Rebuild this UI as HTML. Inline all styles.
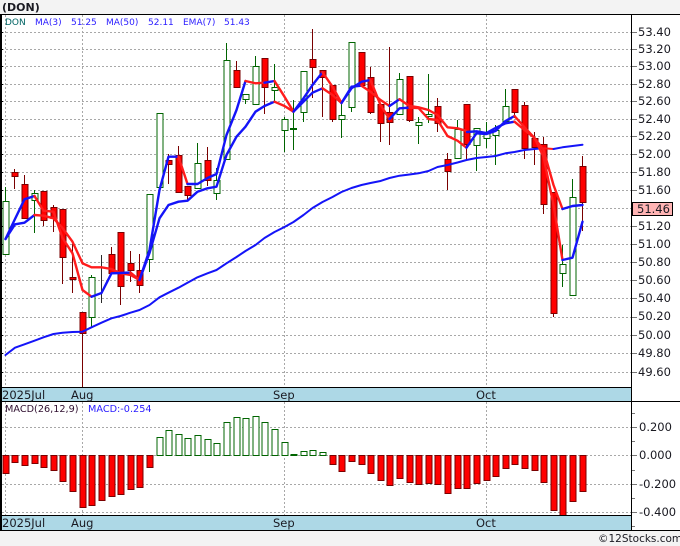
<!DOCTYPE html>
<html><head><meta charset="utf-8"><title>DON</title>
<style>
html,body{margin:0;padding:0;background:#f3f3f3;width:680px;height:546px;overflow:hidden}
svg{display:block}
text{font-family:"DejaVu Sans","Liberation Sans",sans-serif;fill:#1a1a22}
.a{font-size:11.5px}
.g{stroke:#a8a8a8;stroke-width:1;stroke-dasharray:2 2;fill:none}
.bl{fill:none;stroke:#1414f8;stroke-width:2.4;stroke-linejoin:round;stroke-linecap:round}
.rl{fill:none;stroke:#ff1c1c;stroke-width:2.4;stroke-linejoin:round;stroke-linecap:round}
.m{stroke-width:2}
.r rect{fill:#f00;stroke:#7a0000;stroke-width:1}
.n rect{fill:#fff;stroke:#006400;stroke-width:1}
</style></head><body>
<svg width="680" height="546" viewBox="0 0 680 546" xmlns="http://www.w3.org/2000/svg">
<rect width="680" height="546" fill="#f3f3f3"/>
<rect x="0" y="15" width="680" height="516" fill="#fff"/>
<text x="2" y="11" font-size="11" font-weight="bold" fill="#111">(DON)</text>

<g shape-rendering="crispEdges">
<path class="g" d="M2 32.5H632M2 49.5H632M2 66.5H632M2 84.5H632M2 101.5H632M2 119.5H632M2 136.5H632M2 154.5H632M2 172.5H632M2 190.5H632M2 208.5H632M2 226.5H632M2 244.5H632M2 262.5H632M2 280.5H632M2 298.5H632M2 317.5H632M2 335.5H632M2 353.5H632M2 372.5H632"/>
<path class="g" d="M5.5 15V387M82.5 15V387M284.5 15V387M486.5 15V387"/>
<path class="g" d="M2 427.5H632M2 455.5H632M2 484.5H632M2 512.5H632"/>
<path class="g" d="M5.5 402V515M82.5 402V515M284.5 402V515M486.5 402V515"/>
</g>

<g shape-rendering="crispEdges" fill="none" stroke-width="1">
<path stroke="#7a0000" d="M14.5 169V189M24.5 175V218M43.5 191V226M53.5 205V232M62.5 209V284M72.5 244V293M82.5 312V387M111.5 247V273M120.5 232V305M130.5 251V282M139.5 254V293M168.5 154V184M178.5 146V193M187.5 186V201M207.5 147V186M236.5 61V87M264.5 58V114M312.5 29V98M322.5 70V117M332.5 85V122M361.5 52V85M370.5 67V114M380.5 104V142M389.5 47V145M409.5 76V122M437.5 98V132M447.5 153V190M466.5 104V160M514.5 89V118M524.5 102V159M534.5 132V165M543.5 137V214M553.5 192V317M582.5 156V231"/>
<path stroke="#006400" d="M5.5 187V254M34.5 190V233M91.5 275V327M149.5 194V272M197.5 143V188M216.5 168V200M226.5 43V159M245.5 94V104M255.5 56V104M274.5 64V102M284.5 117V152M293.5 100V150M303.5 71V122M341.5 103V138M351.5 42V112M399.5 73V114M418.5 117V144M428.5 74V123M457.5 120V158M476.5 128V171M486.5 122V148M495.5 125V165M505.5 89V121M562.5 245V287M572.5 179V295"/>
<path stroke="#2a2a2a" d="M101.5 255V303"/>
</g>

<g class="r" shape-rendering="crispEdges">
<rect x="12" y="172.5" width="6" height="4"/>
<rect x="22" y="184.5" width="6" height="34"/>
<rect x="41" y="191.5" width="6" height="29"/>
<rect x="51" y="207.5" width="6" height="11"/>
<rect x="60" y="209.5" width="6" height="48"/>
<rect x="70" y="277.5" width="6" height="2"/>
<rect x="80" y="312.5" width="6" height="21"/>
<rect x="109" y="254.5" width="6" height="19"/>
<rect x="118" y="232.5" width="6" height="54"/>
<rect x="128" y="263.5" width="6" height="7"/>
<rect x="137" y="270.5" width="6" height="15"/>
<rect x="166" y="160.5" width="6" height="4"/>
<rect x="176" y="155.5" width="6" height="37"/>
<rect x="185" y="186.5" width="6" height="9"/>
<rect x="205" y="160.5" width="6" height="20"/>
<rect x="234" y="70.5" width="6" height="17"/>
<rect x="262" y="58.5" width="6" height="29"/>
<rect x="310" y="59.5" width="6" height="8"/>
<rect x="320" y="70.5" width="6" height="7"/>
<rect x="330" y="85.5" width="6" height="34"/>
<rect x="359" y="52.5" width="6" height="33"/>
<rect x="368" y="77.5" width="6" height="35"/>
<rect x="378" y="104.5" width="6" height="19"/>
<rect x="387" y="112.5" width="6" height="10"/>
<rect x="407" y="76.5" width="6" height="44"/>
<rect x="435" y="106.5" width="6" height="17"/>
<rect x="445" y="159.5" width="6" height="12"/>
<rect x="464" y="104.5" width="6" height="40"/>
<rect x="512" y="89.5" width="6" height="23"/>
<rect x="522" y="105.5" width="6" height="43"/>
<rect x="532" y="138.5" width="6" height="9"/>
<rect x="541" y="144.5" width="6" height="60"/>
<rect x="551" y="192.5" width="6" height="121"/>
<rect x="580" y="166.5" width="6" height="36"/>
</g>
<g class="n" shape-rendering="crispEdges">
<rect x="3" y="201.5" width="6" height="53"/>
<rect x="32" y="193.5" width="6" height="7"/>
<rect x="89" y="277.5" width="6" height="40"/>
<rect x="147" y="194.5" width="6" height="65"/>
<rect x="157" y="113.5" width="6" height="74"/>
<rect x="195" y="163.5" width="6" height="25"/>
<rect x="214" y="180.5" width="6" height="13"/>
<rect x="224" y="60.5" width="6" height="99"/>
<rect x="243" y="94.5" width="6" height="5"/>
<rect x="253" y="66.5" width="6" height="38"/>
<rect x="272" y="87.5" width="6" height="3"/>
<rect x="282" y="119.5" width="6" height="11"/>
<rect x="301" y="71.5" width="6" height="41"/>
<rect x="339" y="115.5" width="6" height="4"/>
<rect x="349" y="42.5" width="6" height="65"/>
<rect x="397" y="79.5" width="6" height="35"/>
<rect x="416" y="122.5" width="6" height="3"/>
<rect x="426" y="114.5" width="6" height="2"/>
<rect x="455" y="129.5" width="6" height="29"/>
<rect x="474" y="128.5" width="6" height="17"/>
<rect x="484" y="132.5" width="6" height="6"/>
<rect x="493" y="130.5" width="6" height="5"/>
<rect x="503" y="106.5" width="6" height="15"/>
<rect x="560" y="264.5" width="6" height="9"/>
<rect x="570" y="197.5" width="6" height="98"/>
</g>
<path shape-rendering="crispEdges" stroke="#006400" stroke-width="2" d="M290 129H297"/>

<polyline class="bl m" points="5.5,355 15,347.7 24.5,344.3 34.5,340.7 43.5,337.3 53.5,334 62.5,332.7 72.5,332 82.5,331.7 91.5,327.3 101.5,322.7 111.5,318.3 120.5,316 130.5,312.7 139.5,310 149.5,305 159.5,297.3 168.5,292.7 178.5,287.7 187.5,282.7 197.5,277.3 207.5,273.3 216.5,270 226.5,263.3 236.5,257 245.5,251 255.5,245 264.5,238 274.5,232 284.5,227 293.5,222 303.5,215 312.5,208 322.5,202 332.5,197 341.5,192 351.5,188 361.5,185 370.5,183 380.5,181 389.5,178 399.5,175.7 409.5,174.5 418.5,173.3 428.5,171 437.5,167 447.5,165 457.5,162.5 466.5,160 476.5,158 486.5,157 495.5,156 505.5,153.3 514.5,152 524.5,150 534.5,149 543.5,148.3"/>
<polyline class="rl m" points="543.5,148.3 553.5,149"/>
<polyline class="bl m" points="553.5,149 562.5,147.3 572.5,146 582.5,144.7"/>

<polyline class="bl" points="5.5,239 15,224.3 24.5,222.7 34.5,215"/>
<polyline class="rl" points="34.5,215 43.5,215.7 53.5,218.3 62.5,228 72.5,241.7 82.5,263.3 91.5,267.3 101.5,267.3 111.5,269 120.5,273.3 130.5,275 139.5,280"/>
<polyline class="bl" points="139.5,280 149.5,253 159.5,218.3 168.5,205 178.5,201.7 187.5,200.7 197.5,191.7 207.5,188.3 216.5,186.7 226.5,155 236.5,136.7 245.5,126.7 255.5,111.7 264.5,106 274.5,101.7"/>
<polyline class="rl" points="274.5,101.7 284.5,106 293.5,111.7"/>
<polyline class="bl" points="293.5,111.7 303.5,101.7 312.5,92.7 322.5,88.3"/>
<polyline class="rl" points="322.5,88.3 332.5,95 341.5,103"/>
<polyline class="bl" points="341.5,103 351.5,86.7 361.5,85.7"/>
<polyline class="rl" points="361.5,85.7 370.5,91.7 380.5,100 389.5,106"/>
<polyline class="bl" points="389.5,106 399.5,99.3"/>
<polyline class="rl" points="399.5,99.3 409.5,106 418.5,107.3 428.5,110 437.5,115 447.5,127.3 457.5,128.3 466.5,131"/>
<polyline class="bl" points="467,132 476.5,131.3 486.5,133 495.5,128 505.5,123.3 514.5,121.7"/>
<polyline class="rl" points="514.5,121.7 524.5,130 534.5,138 543.5,150 553.5,185 562.5,209"/>
<polyline class="bl" points="562.5,209 572.5,206 582.5,205"/>

<polyline class="bl" points="5.5,239 15,219 24.5,199.3 34.5,196"/>
<polyline class="rl" points="34.5,196 43.5,210.7 53.5,211.7 62.5,238 72.5,253.3 82.5,290 91.5,296.7"/>
<polyline class="bl" points="91.5,296.7 101.5,293 111.5,273.3 120.5,273 130.5,272.5"/>
<polyline class="rl" points="130.5,272.5 139.5,280"/>
<polyline class="bl" points="139.5,280 149.5,250 159.5,190 168.5,156.7 178.5,156.7"/>
<polyline class="rl" points="178.5,156.7 187.5,184"/>
<polyline class="bl" points="187.5,184 197.5,184 207.5,178 216.5,174 226.5,135 236.5,110 245.5,81"/>
<polyline class="rl" points="245.5,81 255.5,83.3 264.5,82.7"/>
<polyline class="bl" points="264.5,82.7 274.5,81"/>
<polyline class="rl" points="274.5,81 284.5,96.7 293.5,111.7"/>
<polyline class="bl" points="293.5,111.7 303.5,98.3 312.5,85 322.5,72.3"/>
<polyline class="rl" points="322.5,72.3 332.5,86.7 341.5,103"/>
<polyline class="bl" points="341.5,103 351.5,88.3 361.5,81.7 370.5,80"/>
<polyline class="rl" points="370.5,80 380.5,105 389.5,119"/>
<polyline class="bl" points="389.5,119 399.5,108.3 409.5,107.7"/>
<polyline class="rl" points="409.5,107.7 418.5,108 428.5,119 437.5,120 447.5,136 457.5,140.7 466.5,147.7"/>
<polyline class="bl" points="466.5,147.7 476.5,133.3 486.5,134 495.5,131 505.5,121 514.5,116"/>
<polyline class="rl" points="514.5,116 524.5,127.3 534.5,138 543.5,156.7 553.5,205 562.5,260"/>
<polyline class="bl" points="562.5,260 572.5,257.7 582.5,221.7"/>

<g class="r" shape-rendering="crispEdges">
<rect x="3" y="455.5" width="6" height="18"/>
<rect x="12" y="455.5" width="6" height="7"/>
<rect x="22" y="455.5" width="6" height="10"/>
<rect x="32" y="455.5" width="6" height="8"/>
<rect x="41" y="455.5" width="6" height="12"/>
<rect x="51" y="455.5" width="6" height="15"/>
<rect x="60" y="455.5" width="6" height="26"/>
<rect x="70" y="455.5" width="6" height="36"/>
<rect x="80" y="455.5" width="6" height="52"/>
<rect x="89" y="455.5" width="6" height="50"/>
<rect x="99" y="455.5" width="6" height="45"/>
<rect x="109" y="455.5" width="6" height="41"/>
<rect x="118" y="455.5" width="6" height="39"/>
<rect x="128" y="455.5" width="6" height="34"/>
<rect x="137" y="455.5" width="6" height="32"/>
<rect x="147" y="455.5" width="6" height="12"/>
<rect x="330" y="455.5" width="6" height="9"/>
<rect x="339" y="455.5" width="6" height="16"/>
<rect x="349" y="455.5" width="6" height="6"/>
<rect x="359" y="455.5" width="6" height="9"/>
<rect x="368" y="455.5" width="6" height="18"/>
<rect x="378" y="455.5" width="6" height="25"/>
<rect x="387" y="455.5" width="6" height="30"/>
<rect x="397" y="455.5" width="6" height="23"/>
<rect x="407" y="455.5" width="6" height="27"/>
<rect x="416" y="455.5" width="6" height="29"/>
<rect x="426" y="455.5" width="6" height="28"/>
<rect x="435" y="455.5" width="6" height="29"/>
<rect x="445" y="455.5" width="6" height="38"/>
<rect x="455" y="455.5" width="6" height="33"/>
<rect x="464" y="455.5" width="6" height="33"/>
<rect x="474" y="455.5" width="6" height="28"/>
<rect x="484" y="455.5" width="6" height="25"/>
<rect x="493" y="455.5" width="6" height="21"/>
<rect x="503" y="455.5" width="6" height="13"/>
<rect x="512" y="455.5" width="6" height="9"/>
<rect x="522" y="455.5" width="6" height="13"/>
<rect x="532" y="455.5" width="6" height="15"/>
<rect x="541" y="455.5" width="6" height="27"/>
<rect x="551" y="455.5" width="6" height="55"/>
<rect x="560" y="455.5" width="6" height="60"/>
<rect x="570" y="455.5" width="6" height="46"/>
<rect x="580" y="455.5" width="6" height="36"/>
</g>
<g class="n" shape-rendering="crispEdges">
<rect x="157" y="437.5" width="6" height="18"/>
<rect x="166" y="430.5" width="6" height="25"/>
<rect x="176" y="434.5" width="6" height="21"/>
<rect x="185" y="438.5" width="6" height="17"/>
<rect x="195" y="435.5" width="6" height="20"/>
<rect x="205" y="439.5" width="6" height="16"/>
<rect x="214" y="443.5" width="6" height="12"/>
<rect x="224" y="422.5" width="6" height="33"/>
<rect x="234" y="417.5" width="6" height="38"/>
<rect x="243" y="418.5" width="6" height="37"/>
<rect x="253" y="416.5" width="6" height="39"/>
<rect x="262" y="422.5" width="6" height="33"/>
<rect x="272" y="429.5" width="6" height="26"/>
<rect x="282" y="442.5" width="6" height="13"/>
<rect x="291" y="454.5" width="6" height="1"/>
<rect x="301" y="451.5" width="6" height="4"/>
<rect x="310" y="450.5" width="6" height="5"/>
<rect x="320" y="452.5" width="6" height="3"/>
</g>

<g shape-rendering="crispEdges">
<rect x="0" y="388" width="632" height="13" fill="#add8e6"/>
<rect x="0" y="516" width="632" height="14" fill="#add8e6"/>
<rect x="0" y="14" width="680" height="1" fill="#000"/>
<rect x="0" y="387" width="632" height="1" fill="#000"/>
<rect x="0" y="401" width="680" height="1" fill="#000"/>
<rect x="0" y="515" width="632" height="1" fill="#000"/>
<rect x="0" y="530" width="680" height="1" fill="#000"/>
<rect x="0" y="14" width="2" height="517" fill="#000"/>
<rect x="631" y="14" width="1" height="517" fill="#000"/>
<path stroke="#000" stroke-width="1" d="M2 32.5H3M2 49.5H3M2 66.5H3M2 84.5H3M2 101.5H3M2 119.5H3M2 136.5H3M2 154.5H3M2 172.5H3M2 190.5H3M2 208.5H3M2 226.5H3M2 244.5H3M2 262.5H3M2 280.5H3M2 298.5H3M2 317.5H3M2 335.5H3M2 353.5H3M2 372.5H3"/>
<path stroke="#777" stroke-width="1" d="M632 32.5H637M632 49.5H637M632 66.5H637M632 84.5H637M632 101.5H637M632 119.5H637M632 136.5H637M632 154.5H637M632 172.5H637M632 190.5H637M632 226.5H637M632 244.5H637M632 262.5H637M632 280.5H637M632 298.5H637M632 317.5H637M632 335.5H637M632 353.5H637M632 372.5H637M632 427.5H637M632 455.5H637M632 484.5H637M632 512.5H637M632 413.5H635M632 441.5H635M632 470.5H635M632 498.5H635M632 526.5H635"/>
<rect x="632.5" y="202.5" width="40" height="13" fill="#ffb4b4" stroke="#000" stroke-width="1"/>
</g>

<text x="5" y="25" font-size="9" style="fill:#006464">DON</text>
<g font-size="9">
<text x="35" y="25" style="fill:#2a1cff">MA(3)</text>
<text x="71" y="25" style="fill:#2a1cff">51.25</text>
<text x="106" y="25" style="fill:#2a1cff">MA(50)</text>
<text x="148" y="25" style="fill:#2a1cff">52.11</text>
<text x="183" y="25" style="fill:#2a1cff">EMA(7)</text>
<text x="224" y="25" style="fill:#2a1cff">51.43</text>
</g>
<text x="5" y="412" font-size="9.7" style="fill:#301030">MACD(26,12,9)</text>
<text x="88" y="412" font-size="9.7" style="fill:#2a1cff">MACD:-0.254</text>

<g class="a">
<text x="638" y="36">53.40</text>
<text x="638" y="53">53.20</text>
<text x="638" y="70">53.00</text>
<text x="638" y="88">52.80</text>
<text x="638" y="105">52.60</text>
<text x="638" y="123">52.40</text>
<text x="638" y="140">52.20</text>
<text x="638" y="158">52.00</text>
<text x="638" y="176">51.80</text>
<text x="638" y="194">51.60</text>
<text x="637" y="213">51.46</text>
<text x="638" y="230">51.20</text>
<text x="638" y="248">51.00</text>
<text x="638" y="266">50.80</text>
<text x="638" y="284">50.60</text>
<text x="638" y="302">50.40</text>
<text x="638" y="320">50.20</text>
<text x="638" y="339">50.00</text>
<text x="638" y="357">49.80</text>
<text x="638" y="376">49.60</text>
<text x="639" y="431">0.200</text>
<text x="639" y="459">0.000</text>
<text x="639" y="488">-0.200</text>
<text x="639" y="516">-0.400</text>
<text x="2" y="399">2025Jul</text>
<text x="71" y="399">Aug</text>
<text x="273" y="399">Sep</text>
<text x="476" y="399">Oct</text>
<text x="2" y="527">2025Jul</text>
<text x="71" y="527">Aug</text>
<text x="273" y="527">Sep</text>
<text x="476" y="527">Oct</text>
</g>
<text x="598" y="542" font-size="10.5">©12Stocks.com</text>
</svg>
</body></html>
